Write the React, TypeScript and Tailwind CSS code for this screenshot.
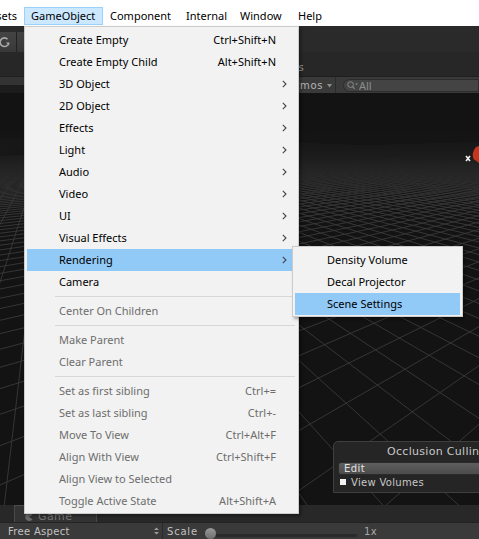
import React from "react";

type Item =
  | { kind: "sep" }
  | { kind: "item"; t: string; s?: string; sub?: boolean; dis?: boolean; active?: boolean };

const items: Item[] = [
  { kind: "item", t: "Create Empty", s: "Ctrl+Shift+N" },
  { kind: "item", t: "Create Empty Child", s: "Alt+Shift+N" },
  { kind: "item", t: "3D Object", sub: true },
  { kind: "item", t: "2D Object", sub: true },
  { kind: "item", t: "Effects", sub: true },
  { kind: "item", t: "Light", sub: true },
  { kind: "item", t: "Audio", sub: true },
  { kind: "item", t: "Video", sub: true },
  { kind: "item", t: "UI", sub: true },
  { kind: "item", t: "Visual Effects", sub: true },
  { kind: "item", t: "Rendering", sub: true, active: true },
  { kind: "item", t: "Camera" },
  { kind: "sep" },
  { kind: "item", t: "Center On Children", dis: true },
  { kind: "sep" },
  { kind: "item", t: "Make Parent", dis: true },
  { kind: "item", t: "Clear Parent", dis: true },
  { kind: "sep" },
  { kind: "item", t: "Set as first sibling", s: "Ctrl+=", dis: true },
  { kind: "item", t: "Set as last sibling", s: "Ctrl+-", dis: true },
  { kind: "item", t: "Move To View", s: "Ctrl+Alt+F", dis: true },
  { kind: "item", t: "Align With View", s: "Ctrl+Shift+F", dis: true },
  { kind: "item", t: "Align View to Selected", dis: true },
  { kind: "item", t: "Toggle Active State", s: "Alt+Shift+A", dis: true },
];

const MENU_FONT = { fontFamily: '"Noto Sans", "Liberation Sans", sans-serif' };
const UNITY_FONT = { fontFamily: '"DejaVu Sans", "Liberation Sans", sans-serif' };

function Chevron() {
  return (
    <svg width="5" height="8" viewBox="0 0 5 8" className="ml-[6px]">
      <path d="M0.8 0.8 L4 4 L0.8 7.2" fill="none" stroke="#444" strokeWidth="1.1" />
    </svg>
  );
}

function Grid() {
  const W = 479;
  const H = 412;
  const hy = 40;
  const f = 360;
  const cx = 300;
  const camH = 6;
  const th = (35 * Math.PI) / 180;
  const c = Math.cos(th);
  const s = Math.sin(th);
  const ox = 0.37;
  const oz = 0.21;
  const zn = 0.3;
  const zf = 400;
  const lines: { x1: number; y1: number; x2: number; y2: number }[] = [];
  const proj = (X: number, Z: number) => ({ x: cx + (f * X) / Z, y: hy + (f * camH) / Z });
  for (let k = -120; k <= 120; k++) {
    {
      const X0 = k * c + ox, dX = -s;
      const Z0 = k * s + oz, dZ = c;
      const v1 = (zn - Z0) / dZ, v2 = (zf - Z0) / dZ;
      const a = proj(X0 + dX * v1, zn);
      const b = proj(X0 + dX * v2, zf);
      lines.push({ x1: a.x, y1: a.y, x2: b.x, y2: b.y });
    }
    {
      const X0 = -k * s + ox, dX = c;
      const Z0 = k * c + oz, dZ = s;
      const u1 = (zn - Z0) / dZ, u2 = (zf - Z0) / dZ;
      const a = proj(X0 + dX * u1, zn);
      const b = proj(X0 + dX * u2, zf);
      lines.push({ x1: a.x, y1: a.y, x2: b.x, y2: b.y });
    }
  }
  return (
    <svg className="absolute inset-0" width={W} height={H} viewBox={`0 0 ${W} ${H}`}>
      <defs>
        <linearGradient id="fade" x1="0" y1="0" x2="0" y2="1">
          <stop offset="0" stopColor="#141414" stopOpacity="1" />
          <stop offset="0.35" stopColor="#141414" stopOpacity="0.8" />
          <stop offset="1" stopColor="#141414" stopOpacity="0" />
        </linearGradient>
        <clipPath id="below">
          <rect x="0" y={hy} width={W} height={H - hy} />
        </clipPath>
      </defs>
      <g clipPath="url(#below)">
        {lines.map((l, i) => (
          <line
            key={i}
            x1={l.x1.toFixed(1)}
            y1={l.y1.toFixed(1)}
            x2={l.x2.toFixed(1)}
            y2={l.y2.toFixed(1)}
            stroke="#3a3a3a"
            strokeWidth="0.9"
          />
        ))}
      </g>
      <rect x="0" y={hy - 2} width={W} height="70" fill="url(#fade)" />
      <path d="M479 53 L476 54 Q471 60 473.5 66 L479 70 Z" fill="#c4361d" />
      <path d="M466 63 L470 68 M470 63 L466 68" stroke="#f0f0f0" strokeWidth="1.6" />
    </svg>
  );
}

export default function App() {
  return (
    <div
      className="w-[479px] h-[539px] relative overflow-hidden bg-[#131313] flex flex-col select-none"
      style={MENU_FONT}
    >
      {/* Menu bar */}
      <div className="h-[26px] shrink-0 bg-white flex items-start pt-[7px] text-[11px] text-black">
        <div className="w-[24px] h-[18px] flex justify-end items-center overflow-hidden pr-[7px] whitespace-nowrap">
          Assets
        </div>
        <div className="w-[79px] h-[18px] flex items-center pl-[6px] border border-[#99d1ff] bg-[#cce8ff]">
          GameObject
        </div>
        <div className="w-[76px] h-[18px] flex items-center pl-[7px]">Component</div>
        <div className="w-[54px] h-[18px] flex items-center pl-[7px]">Internal</div>
        <div className="w-[58px] h-[18px] flex items-center pl-[7px]">Window</div>
        <div className="h-[18px] flex items-center pl-[7px]">Help</div>
      </div>

      {/* Main toolbar */}
      <div className="h-[26px] shrink-0 bg-[#2a2a2a] pt-[6px] flex">
        <div className="w-[16px] h-[20px] bg-gradient-to-b from-[#444] to-[#393939] flex items-center">
          <svg width="10" height="12" viewBox="0 0 10 12">
            <path d="M7.5 3.2 A4.3 4.3 0 1 0 8 8.6" fill="none" stroke="#a9a9a9" strokeWidth="1.6" />
            <path d="M6 6.5 L9.6 6.5 L8.8 9.8 Z" fill="#a9a9a9" />
          </svg>
        </div>
        <div className="w-px h-[20px] bg-[#222]" />
        <div className="w-[12px] h-[20px] bg-gradient-to-b from-[#424242] to-[#373737]" />
      </div>

      {/* Tab strip */}
      <div className="h-[24px] shrink-0 bg-[#272727] flex items-center pt-[6px]" style={UNITY_FONT}>
        <div className="w-[304px] flex justify-end overflow-hidden text-[10px] text-[#9a9a9a] tracking-[0.4px]">
          Scenes
        </div>
      </div>

      {/* Scene toolbar */}
      <div className="h-[17px] shrink-0 bg-[#3a3a3a] border-t border-[#1f1f1f] flex items-center" style={UNITY_FONT}>
        <div className="w-[24px] self-stretch flex flex-col">
          <div className="h-[8px] bg-[#333]" />
          <div className="flex-1 bg-[#1c1c1c]" />
        </div>
        <div className="w-[299px] flex justify-end text-[10px] text-[#b4b4b4] tracking-[0.6px]">Gizmos</div>
        <svg width="5" height="4" viewBox="0 0 5 4" className="ml-[4px] mt-[1px]">
          <path d="M0 0 L5 0 L2.5 3.5 Z" fill="#8e8e8e" />
        </svg>
        <div className="ml-[3px] w-px self-stretch bg-[#2b2b2b]" />
        <div className="ml-[7px] flex-1 h-[13px] rounded-l-full bg-[#444] border border-[#2c2c2c] flex items-center pl-[3px]">
          <svg width="12" height="9" viewBox="0 0 12 9">
            <circle cx="3.6" cy="3.6" r="2.8" fill="none" stroke="#8a8a8a" strokeWidth="1" />
            <path d="M5.6 5.6 L7.6 7.8" stroke="#8a8a8a" strokeWidth="1.2" />
            <path d="M8 2.5 L11 2.5 L9.5 4.2 Z" fill="#8a8a8a" />
          </svg>
          <span className="text-[11px] leading-none text-[#8d8d8d]" style={MENU_FONT}>All</span>
        </div>
      </div>

      {/* Viewport */}
      <div className="relative flex-1 overflow-hidden bg-[#131313]">
        <Grid />
        <div
          className="absolute left-[333px] top-[348px] w-[160px] h-[52px] rounded-tl-[5px] bg-[#262626]/95 border border-[#3f3f3f] flex flex-col"
          style={UNITY_FONT}
        >
          <div className="h-[17px] flex items-center pt-[3px] pl-[53px] text-[11px] text-[#c8c8c8] tracking-[0.3px] whitespace-nowrap">
            Occlusion Culling
          </div>
          <div className="ml-[4px] mt-[3px] h-[13px] rounded-l-[3px] bg-gradient-to-b from-[#5e5e5e] to-[#4c4c4c] border border-[#2a2a2a] flex items-center pl-[5px] text-[10px] text-[#e2e2e2] tracking-[0.4px]">
            Edit
          </div>
          <div className="h-[14px] flex items-center pl-[6px] text-[10px] text-[#c8c8c8] tracking-[0.3px]">
            <div className="w-[6px] h-[6px] bg-[#f2f2f2]" />
            <span className="ml-[5px]">View Volumes</span>
          </div>
        </div>
      </div>

      {/* Game tab row */}
      <div className="h-[17px] shrink-0 bg-[#282828] flex" style={UNITY_FONT}>
        <div className="ml-[14px] w-[83px] h-full bg-[#333] border-l border-t border-r border-[#4a4a4a] flex items-center pt-[6px] pl-[10px]">
          <svg width="8" height="8" viewBox="0 0 8 8">
            <path d="M4 4 L7.5 1.8 A4 4 0 1 0 7.5 6.2 Z" fill="#6a6a6a" />
          </svg>
          <span className="ml-[5px] text-[11px] text-[#777] tracking-[0.4px]">Game</span>
        </div>
      </div>

      {/* Bottom bar */}
      <div
        className="h-[17px] shrink-0 bg-[#3a3a3a] border-t border-[#222] flex items-center text-[10px] text-[#c2c2c2] tracking-[0.3px]"
        style={UNITY_FONT}
      >
        <span className="ml-[8px] w-[146px]">Free Aspect</span>
        <svg width="5" height="8" viewBox="0 0 5 8">
          <path d="M0 3 L5 3 L2.5 0.5 Z M0 5 L5 5 L2.5 7.5 Z" fill="#9a9a9a" />
        </svg>
        <div className="ml-[3px] w-px self-stretch bg-[#2a2a2a]" />
        <span className="ml-[4px] tracking-[0.8px]">Scale</span>
        <div className="ml-[7px] w-[11px] h-[11px] rounded-full bg-gradient-to-b from-[#9a9a9a] to-[#6e6e6e] mt-[4px]" />
        <div className="w-[141px] h-[3px] mt-[8px] bg-[#2a2a2a] rounded-r-full" />
        <span className="ml-[7px] text-[#a8a8a8] tracking-[0.5px]">1x</span>
      </div>

      {/* GameObject dropdown */}
      <div className="absolute left-[24px] top-[26px] w-[275px] bg-[#f2f2f2] border border-[#cccccc] pt-[2px] pb-[1px] px-[2px] text-[11px] shadow-[2px_2px_3px_rgba(0,0,0,0.35)]">
        {items.map((it, i) =>
          it.kind === "sep" ? (
            <div key={i} className="h-[7px] flex items-center">
              <div className="ml-[28px] mr-[1px] flex-1 h-px bg-[#d7d7d7]" />
            </div>
          ) : (
            <div
              key={i}
              className={`h-[22px] flex items-center pl-[32px] ${it.active ? "bg-[#91c9f7]" : ""} ${
                it.dis ? "text-[#6d6d6d]" : "text-black"
              }`}
            >
              <span className="flex-1 whitespace-nowrap">{it.t}</span>
              {it.s ? <span className="whitespace-nowrap">{it.s}</span> : null}
              <div className="w-[20px] flex items-center">{it.sub ? <Chevron /> : null}</div>
            </div>
          )
        )}
      </div>

      {/* Rendering submenu */}
      <div className="absolute left-[292px] top-[246px] w-[171px] bg-[#f2f2f2] border border-[#cccccc] pt-[2px] pb-[1px] px-[2px] text-[11px] text-black shadow-[2px_2px_3px_rgba(0,0,0,0.35)]">
        <div className="h-[22px] flex items-center pl-[32px]">Density Volume</div>
        <div className="h-[22px] flex items-center pl-[32px]">Decal Projector</div>
        <div className="h-[22px] flex items-center pl-[32px] bg-[#91c9f7]">Scene Settings</div>
      </div>
    </div>
  );
}
